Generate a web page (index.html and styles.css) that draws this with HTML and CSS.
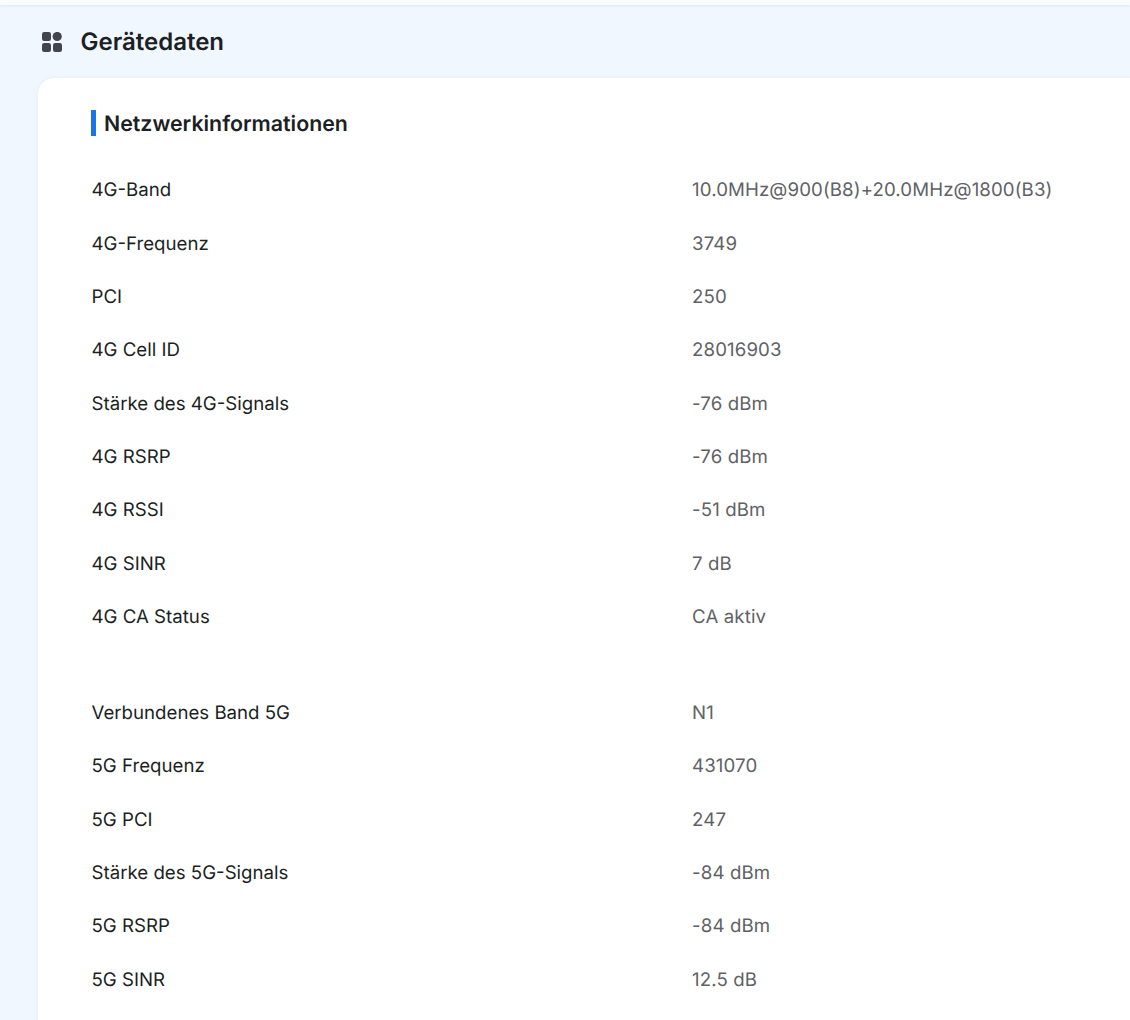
FILE: index.html
```html
<!DOCTYPE html>
<html lang="de">
<head>
<meta charset="utf-8">
<title>Gerätedaten</title>
<link rel="stylesheet" href="styles.css">
</head>
<body>
<div class="topbar"></div>
<main class="page">
  <header class="page-head">
    <svg class="head-icon" viewBox="0 0 20 20" width="20" height="20" aria-hidden="true">
      <rect x="0" y="0" width="9" height="9" rx="2.2"/>
      <circle cx="15.2" cy="4.5" r="4.6"/>
      <rect x="0" y="11" width="9" height="9" rx="2.2"/>
      <rect x="11" y="11" width="9" height="9" rx="2.2"/>
    </svg>
    <h1 class="page-title">Gerätedaten</h1>
  </header>
  <section class="card">
    <h2 class="section-title">Netzwerkinformationen</h2>
    <dl class="group">
      <div class="row"><dt>4G-Band</dt><dd>10.0MHz@900(B8)+20.0MHz@1800(B3)</dd></div>
      <div class="row"><dt>4G-Frequenz</dt><dd>3749</dd></div>
      <div class="row"><dt>PCI</dt><dd>250</dd></div>
      <div class="row"><dt>4G Cell ID</dt><dd>28016903</dd></div>
      <div class="row"><dt>Stärke des 4G-Signals</dt><dd>-76 dBm</dd></div>
      <div class="row"><dt>4G RSRP</dt><dd>-76 dBm</dd></div>
      <div class="row"><dt>4G RSSI</dt><dd>-51 dBm</dd></div>
      <div class="row"><dt>4G SINR</dt><dd>7 dB</dd></div>
      <div class="row"><dt>4G CA Status</dt><dd>CA aktiv</dd></div>
    </dl>
    <dl class="group group-second">
      <div class="row"><dt>Verbundenes Band 5G</dt><dd>N1</dd></div>
      <div class="row"><dt>5G Frequenz</dt><dd>431070</dd></div>
      <div class="row"><dt>5G PCI</dt><dd>247</dd></div>
      <div class="row"><dt>Stärke des 5G-Signals</dt><dd>-84 dBm</dd></div>
      <div class="row"><dt>5G RSRP</dt><dd>-84 dBm</dd></div>
      <div class="row"><dt>5G SINR</dt><dd>12.5 dB</dd></div>
    </dl>
  </section>
</main>
</body>
</html>
```
FILE: styles.css
```css
* { box-sizing: border-box; }
html, body { margin: 0; height: 100%; overflow: hidden; }
body {
  background: #f0f7fe;
  font-family: Inter, "Liberation Sans", sans-serif;
  color: #1c1f23;
  text-rendering: geometricPrecision;
}
.topbar {
  height: 5px;
  background: #fafbfc;
  box-shadow: 0 1px 3px rgba(30, 50, 90, 0.08);
}
.page { padding-left: 38px; }
.page-head {
  display: flex;
  align-items: center;
  gap: 19px;
  height: 73px;
  padding-left: 3.5px;
}
.head-icon { fill: #42464c; flex: none; }
.page-title {
  margin: 0;
  font-size: 24px;
  font-weight: 600;
}
.card {
  background: #fff;
  border-radius: 16px 0 0 0;
  padding: 32px 0 0 53px;
  height: 960px;
  box-shadow: 0 0 4px rgba(30, 50, 90, 0.06);
}
.section-title {
  margin: 0 0 27.1px;
  height: 26px;
  line-height: 28px;
  border-left: 5px solid #1a73e8;
  padding-left: 8px;
  font-size: 21.33px;
  font-weight: 600;
}
.group { margin: 0; }
.group-second { margin-top: 42.7px; }
.row {
  display: flex;
  align-items: center;
  height: 53.33px;
  font-size: 18.67px;
  padding-left: 0.5px;
}
.row dt { width: 600.6px; flex: none; }
.row dd { margin: 0; color: #606266; letter-spacing: 0.1px; }
```
